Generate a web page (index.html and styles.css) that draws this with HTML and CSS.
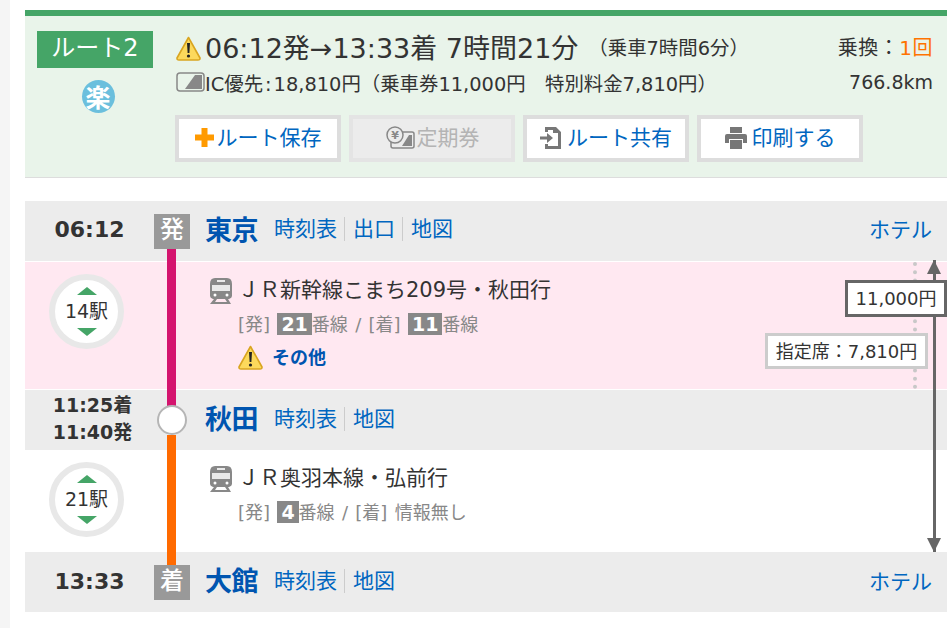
FILE: index.html
```html
<!DOCTYPE html>
<html lang="ja">
<head>
<meta charset="utf-8">
<title>ルート2</title>
<link rel="stylesheet" href="styles.css">
</head>
<body>
<div class="page">
  <div class="sidebar"></div>
  <main class="main">
    <section class="summary">
      <div class="summary-left">
        <div class="route-label">ルート2</div>
        <div class="raku">楽</div>
      </div>
      <div class="summary-body">
        <div class="summary-line first">
          <svg class="warn-lg" viewBox="0 0 25 25"><path d="M12.5 1.5 L24 22 Q24.2 24 22 24 L3 24 Q.8 24 1 22 Z" fill="#fcd95c" stroke="#d9a520" stroke-width="1.6" stroke-linejoin="round"/><path d="M11 7h3l-.6 10h-1.8z" fill="#222"/><circle cx="12.5" cy="20" r="1.6" fill="#222"/></svg>
          <span class="title">06:12発→13:33着 7時間21分</span>
          <span class="ride">（乗車7時間6分）</span>
          <span class="right big">乗換：<em class="count">1回</em></span>
        </div>
        <div class="summary-line second">
          <svg class="ic" viewBox="0 0 29 20"><rect x="1" y="1" width="27" height="18" rx="3" fill="none" stroke="#888" stroke-width="1.5"/><path d="M9 17 L19 3 H26 V17 Z" fill="#888"/></svg>
          <span class="ic-text">IC優先<span class="colon">:</span>18,810円（乗車券11,000円　特別料金7,810円）</span>
          <span class="right">766.8km</span>
        </div>
        <div class="buttons">
          <a class="btn"><svg class="ico-plus" viewBox="0 0 19 19"><path d="M6.5 0h6v6.500H19v6h-6.500V19h-6v-6.500H0v-6h6.500z" fill="#ff9a00"/></svg>ルート保存</a>
          <a class="btn off"><svg class="ico-pass" viewBox="0 0 30 24"><rect x="6" y="6" width="23" height="16" rx="2" fill="none" stroke="#888" stroke-width="1.5"/><path d="M17 20 L24 9 H27 V20 Z" fill="#888"/><circle cx="10" cy="9" r="8" fill="#ececec" stroke="#888" stroke-width="1.5"/><text x="10" y="13" class="yen">¥</text></svg>定期券</a>
          <a class="btn"><svg class="ico-share" viewBox="0 0 22 24"><path d="M5 6V1h11l5 5v17H5v-5h3v2h10V7h-5V4H8v2z" fill="#777"/><path d="M0 10.500h7V7l6 5-6 5v-3.500H0z" fill="#777"/></svg>ルート共有</a>
          <a class="btn"><svg class="ico-print" viewBox="0 0 22 22"><path d="M5 0h12v6H5z" fill="#777"/><path d="M2 7h18q2 0 2 2v7h-4v-4H4v4H0V9q0-2 2-2z" fill="#777"/><path d="M5 13h12v9H5z" fill="#777"/></svg>印刷する</a>
        </div>
      </div>
    </section>

    <section class="route">
      <div class="row station top">
        <div class="time">06:12</div>
        <div class="mark">発</div>
        <div class="name">東京</div>
        <nav class="links"><a>時刻表</a><a>出口</a><a>地図</a></nav>
        <a class="hotel">ホテル</a>
      </div>
      <div class="row leg pink">
        <div class="stops"><div class="circle"><i class="up"></i><span>14駅</span><i class="down"></i></div></div>
        <div class="leg-body">
          <div class="line-name">
            <svg class="train" viewBox="0 0 24 27"><path d="M6 1h12q5 0 5 6v12q0 2-3 3H4q-3-1-3-3V7q0-6 5-6z" fill="#888"/><path d="M3 8h18v6H3z" fill="#e9e9e9"/><path d="M8 3h8v2H8z" fill="#e9e9e9"/><circle cx="6" cy="18" r="1.500" fill="#fff"/><circle cx="18" cy="18" r="1.500" fill="#fff"/><path d="M5 22h3l-2 3h12l-2-3h3l3 5H1z" fill="#888"/></svg>
            <span>ＪＲ新幹線こまち209号・秋田行</span>
          </div>
          <div class="tracks">[発] <b>21</b>番線 / [着] <b>11</b>番線</div>
          <div class="notice">
            <svg class="warn-sm" viewBox="0 0 25 25"><path d="M12.5 1.500 L24 22 Q24.200 24 22 24 L3 24 Q.8 24 1 22 Z" fill="#fcd95c" stroke="#d9a520" stroke-width="1.6" stroke-linejoin="round"/><path d="M11 7h3l-.6 10h-1.800z" fill="#222"/><circle cx="12.500" cy="20" r="1.600" fill="#222"/></svg>
            <a class="notice-text">その他</a>
          </div>
        </div>
        <div class="fare-dots"></div>
        <div class="fare-sub">指定席：7,810円</div>
      </div>
      <div class="row station mid">
        <div class="time two">11:25着<br>11:40発</div>
        <div class="mark-space"></div>
        <div class="name">秋田</div>
        <nav class="links"><a>時刻表</a><a>地図</a></nav>
      </div>
      <div class="row leg plain">
        <div class="stops"><div class="circle"><i class="up"></i><span>21駅</span><i class="down"></i></div></div>
        <div class="leg-body">
          <div class="line-name">
            <svg class="train" viewBox="0 0 24 27"><path d="M6 1h12q5 0 5 6v12q0 2-3 3H4q-3-1-3-3V7q0-6 5-6z" fill="#888"/><path d="M3 8h18v6H3z" fill="#e9e9e9"/><path d="M8 3h8v2H8z" fill="#e9e9e9"/><circle cx="6" cy="18" r="1.500" fill="#fff"/><circle cx="18" cy="18" r="1.500" fill="#fff"/><path d="M5 22h3l-2 3h12l-2-3h3l3 5H1z" fill="#888"/></svg>
            <span>ＪＲ奥羽本線・弘前行</span>
          </div>
          <div class="tracks">[発] <b>4</b>番線 / [着] 情報無し</div>
        </div>
      </div>
      <div class="row station last">
        <div class="time">13:33</div>
        <div class="mark">着</div>
        <div class="name">大館</div>
        <nav class="links"><a>時刻表</a><a>地図</a></nav>
        <a class="hotel">ホテル</a>
      </div>

      <div class="seg seg-pink"></div>
      <div class="seg seg-orange"></div>
      <div class="node"></div>
      <div class="fare-arrow"><i class="head-up"></i><i class="head-down"></i></div>
      <div class="fare-main">11,000円</div>
    </section>
  </main>
</div>
</body>
</html>
```
FILE: styles.css
```css
* { box-sizing: border-box; }
html, body { margin: 0; padding: 0; background: #fff; }
body {
  font-family: "DejaVu Sans", "Noto Sans CJK JP", sans-serif;
  color: #333;
  overflow: hidden;
}
em { font-style: normal; }
.page { display: flex; width: 952px; height: 628px; }
.sidebar { width: 10px; background: #f5f5f5; }
.main { width: 922px; margin-left: 15px; padding-top: 10px; }

.summary {
  display: flex;
  height: 168px;
  background: #e9f4ea;
  border-top: 6px solid #45a567;
  border-bottom: 1px solid #ddd;
  padding: 15px 14px 0 12px;
}
.summary-left { width: 116px; margin-right: 22px; display: flex; flex-direction: column; align-items: center; }
.route-label { width: 116px; height: 37px; line-height: 34px; background: #45a567; color: #fff; font-size: 24px; text-align: center; }
.raku { width: 33px; height: 33px; margin: 12px 0 0 6px; border-radius: 50%; background: #6bbfdd; color: #fff; font: bold 25px/32px "Noto Sans CJK JP", sans-serif; text-align: center; }
.summary-body { flex: 1; }
.summary-line { display: flex; align-items: center; }
.summary-line.first { height: 34px; }
.summary-line.second { height: 26px; margin-top: 4px; font-size: 19.4px; }
.warn-lg { width: 25px; height: 25px; margin: 0 4px 0 1px; flex: none; }
.title { font-size: 27px; margin-bottom: 4px; white-space: nowrap; }
.ride { font-size: 19.4px; margin: 0 0 4px 10px; white-space: nowrap; }
.right { margin-left: auto; font-size: 19px; }
.right.big { font-size: 20px; margin-bottom: 4px; letter-spacing: .5px; }
.count { color: #ff7300; }
.ic { width: 29px; height: 20px; flex: none; margin-left: 1px; }
.ic-text { white-space: nowrap; }
.colon { padding: 0 2px; }
.buttons { display: flex; gap: 8px; margin-top: 20px; }
.btn {
  width: 166px; height: 47px;
  border: 4px solid #ddd;
  background: #fff;
  color: #0066c0;
  font-size: 21px;
  padding-bottom: 5px;
  display: flex; align-items: center; justify-content: center; gap: 2px;
}
.btn.off { background: #ececec; border-color: #e4e4e4; color: #b4b4b4; }
.ico-plus { width: 19px; height: 19px; margin: 3px 1px 0 0; }
.ico-pass { width: 30px; height: 24px; margin-top: 3px; }
.yen { font: bold 11px "DejaVu Sans", sans-serif; text-anchor: middle; fill: #888; }
.ico-share { width: 22px; height: 24px; margin: 3px 3px 0 0; }
.ico-print { width: 22px; height: 22px; margin: 3px 3px 0 0; }

.route { position: relative; margin-top: 23px; width: 922px; }
.row { position: relative; display: flex; }
.station { align-items: center; background: #ececec; }
.top { height: 61px; border-bottom: 1px solid #fff; }
.mid { height: 60px; }
.last { height: 60px; }
.time { width: 129px; text-align: center; font-size: 22px; font-weight: bold; margin-bottom: 4px; }
.time.two { font-size: 19px; line-height: 27px; margin-bottom: 2px; padding-left: 6px; }
.mark { width: 36px; height: 35px; background: #999; color: #fff; text-align: center; font-size: 24px; line-height: 33px; font-weight: 500; position: relative; z-index: 2; }
.mark-space { width: 36px; }
.name { margin: 0 0 6px 15px; width: 69px; color: #0055b0; font-size: 27px; font-weight: bold; white-space: nowrap; letter-spacing: -.5px; }
.links { display: flex; font-size: 21px; color: #0066c0; margin-bottom: 4px; }
.mid .links, .last .links { margin-bottom: 2px; }
.last .time { margin-bottom: 2px; }
.links a { padding: 0 7px 0 8px; border-right: 1px solid #ccc; line-height: 24px; }
.links a:first-child { padding-left: 0; }
.links a:last-child { border-right: 0; }
.hotel { margin: 0 15px 6px auto; font-size: 21px; color: #0066c0; }
.last .hotel { margin-bottom: 5px; }
.pink { background: #ffe8f1; height: 128px; border-bottom: 1px solid #fff; }
.plain { background: #fff; height: 102px; }
.stops { width: 129px; padding: 12px 0 0 24px; }
.circle {
  width: 75px; height: 75px;
  border: 6px solid #e8e8e8;
  border-radius: 50%;
  background: #fff;
  display: flex; flex-direction: column; align-items: center; justify-content: center;
  font-size: 19px;
}
.circle span { line-height: 24px; margin: 4px 0 5px; }
.up, .down { width: 0; height: 0; border-left: 10.500px solid transparent; border-right: 10.500px solid transparent; }
.up { border-bottom: 8px solid #45a567; }
.down { border-top: 8px solid #45a567; }
.leg-body { margin-left: 55px; padding-top: 11px; }
.line-name { display: flex; align-items: center; font-size: 21px; height: 30px; }
.line-name span { white-space: nowrap; }
.train { width: 24px; height: 27px; margin: 4px 5px 0 0; flex: none; }
.tracks { margin: 8px 0 0 29px; font-size: 18px; color: #888; line-height: 27px; word-spacing: 1.6px; white-space: nowrap; }
.tracks b { display: inline-block; background: #888; color: #fff; padding: 0 4px; line-height: 22px; font-size: 19px; }
.notice { display: flex; align-items: center; margin: 5px 0 0 29px; font-size: 18px; font-weight: bold; color: #0055b0; }
.notice-text { margin-bottom: 2px; }
.warn-sm { width: 25px; height: 25px; margin-right: 9px; }

.seg { position: absolute; left: 142px; width: 9px; }
.seg-pink { top: 47px; height: 158px; background: #d4146e; }
.seg-orange { top: 234px; height: 130px; background: #ff6a00; }
.node { position: absolute; left: 132px; top: 204px; width: 30px; height: 30px; border-radius: 50%; background: #fff; border: 2px solid #b5b5b5; }
.fare-dots { position: absolute; left: 888px; top: 0; height: 127px; border-left: 4px dotted #c8c8c8; }
.fare-sub { position: absolute; left: 740px; top: 71px; width: 163px; height: 36px; border: 3px solid #ccc; background: #fff; text-align: center; font-size: 18px; line-height: 31px; }
.fare-arrow { position: absolute; left: 908px; top: 59px; width: 3px; height: 292px; background: #666; }
.head-up, .head-down { position: absolute; left: -6px; width: 0; height: 0; border-left: 7.500px solid transparent; border-right: 7.500px solid transparent; }
.head-up { top: 0; border-bottom: 14px solid #666; }
.head-down { bottom: 0; border-top: 14px solid #666; }
.fare-main { position: absolute; left: 820px; top: 79px; width: 102px; height: 37px; border: 3px solid #666; background: #fff; text-align: center; font-size: 18px; line-height: 31px; }
```
